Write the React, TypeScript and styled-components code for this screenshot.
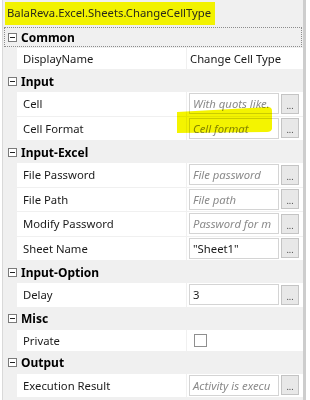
import styled, { createGlobalStyle } from "styled-components";

const GlobalStyle = createGlobalStyle`
  html, body {
    margin: 0;
    padding: 0;
    background: #ffffff;
  }
  body {
    font-family: "Noto Sans", "Open Sans", sans-serif;
    -webkit-font-smoothing: antialiased;
  }
`

const Panel = styled.div`
  position: relative;
  margin-left: 2px;
  width: 300px;
  height: 400px;
  background: #f0f0f0;
  border-left: 1px solid #d9d9d9;
  border-right: 3px solid #cdcdcd;
  overflow: hidden;
`
const TitleBar = styled.div`
  height: 26px;
  display: flex;
  align-items: center;
  padding-left: 2px;
`
const TitleMark = styled.span`
  background: #f2f200;
  height: 23px;
  line-height: 22px;
  padding: 0 4px 0 2px;
  font-size: 11.3px;
  color: #2a2a1a;
`
const GroupHeader = styled.div<{ $focused?: boolean }>`
  height: 22px;
  box-sizing: border-box;
  display: flex;
  align-items: center;
  gap: 4px;
  padding-left: 5px;
  font-size: 12px;
  font-weight: 700;
  color: #000;
  outline: ${p => (p.$focused ? "1px dotted #8c8c8c" : "none")};
  outline-offset: -2px;
`
const Toggle = styled.span`
  position: relative;
  width: 9px;
  height: 9px;
  box-sizing: border-box;
  border: 1px solid #7a7a7a;
  background: #fff;
  &::after {
    content: "";
    position: absolute;
    left: 1px;
    right: 1px;
    top: 3px;
    height: 1px;
    background: #222;
  }
`
const Row = styled.div<{ $tall?: boolean }>`
  display: grid;
  grid-template-columns: 170px 1fr;
  height: ${p => (p.$tall ? "24.5px" : "22px")};
  box-sizing: border-box;
  margin-left: 14px;
  background: #fff;
  border-bottom: 1px solid #f0f0f0;
  font-size: 11.3px;
  color: #1a1a1a;
`
const Label = styled.div`
  display: flex;
  align-items: center;
  padding-left: 6px;
  border-right: 1px solid #f0f0f0;
`
const Value = styled.div`
  display: flex;
  align-items: center;
  gap: 2px;
  padding-left: 2px;
`
const PlainValue = styled.span`
  padding-left: 1px;
`
const TextBox = styled.div<{ $hint?: boolean }>`
  width: 90px;
  height: 21px;
  box-sizing: border-box;
  border: 1px solid #d4d4d4;
  background: #fff;
  padding-left: 3px;
  line-height: 19px;
  white-space: nowrap;
  overflow: hidden;
  font-style: ${p => (p.$hint ? "italic" : "normal")};
  color: ${p => (p.$hint ? "#8a8a8a" : "#1a1a1a")};
`
const DotsButton = styled.div`
  width: 18px;
  height: 20px;
  box-sizing: border-box;
  border: 1px solid #c4c4c4;
  background: #e8e8e8;
  display: flex;
  align-items: flex-end;
  justify-content: center;
  font-size: 9px;
  line-height: 14px;
  color: #444;
`
const CheckBox = styled.span`
  width: 13px;
  height: 13px;
  box-sizing: border-box;
  margin-left: 5px;
  border: 1px solid #8f8f8f;
  background: #fff;
`
const Marker = styled.svg`
  position: absolute;
  left: 0;
  top: 0;
  mix-blend-mode: multiply;
  pointer-events: none;
`

type Prop =
  | { label: string; kind: "text"; value: string; hint?: boolean }
  | { label: string; kind: "plain"; value: string }
  | { label: string; kind: "check" };

const GROUPS: { name: string; props: Prop[] }[] = [
  { name: "Common", props: [{ label: "DisplayName", kind: "plain", value: "Change Cell Type" }] },
  {
    name: "Input",
    props: [
      { label: "Cell", kind: "text", value: "With quots like.", hint: true },
      { label: "Cell Format", kind: "text", value: "Cell format", hint: true },
    ],
  },
  {
    name: "Input-Excel",
    props: [
      { label: "File Password", kind: "text", value: "File password", hint: true },
      { label: "File Path", kind: "text", value: "File path", hint: true },
      { label: "Modify Password", kind: "text", value: "Password for m", hint: true },
      { label: "Sheet Name", kind: "text", value: "\"Sheet1\"" },
    ],
  },
  { name: "Input-Option", props: [{ label: "Delay", kind: "text", value: "3" }] },
  { name: "Misc", props: [{ label: "Private", kind: "check" }] },
  {
    name: "Output",
    props: [{ label: "Execution Result", kind: "text", value: "Activity is execu", hint: true }],
  },
];

const PropRow = ({ p }: { p: Prop }) => (
  <Row $tall={p.kind === "text"}>
    <Label>{p.label}</Label>
    <Value>
      {p.kind === "text" && (
        <>
          <TextBox $hint={p.hint}>{p.value}</TextBox>
          <DotsButton>...</DotsButton>
        </>
      )}
      {p.kind === "plain" && <PlainValue>{p.value}</PlainValue>}
      {p.kind === "check" && <CheckBox />}
    </Value>
  </Row>
);

export default function App() {
  return (
    <>
      <GlobalStyle />
      <Panel>
        <TitleBar>
          <TitleMark>BalaReva.Excel.Sheets.ChangeCellType</TitleMark>
        </TitleBar>
        {GROUPS.map((g, i) => (
          <div key={g.name}>
            <GroupHeader $focused={i === 0}>
              <Toggle />
              {g.name}
            </GroupHeader>
            {g.props.map(p => (
              <PropRow key={p.label} p={p} />
            ))}
          </div>
        ))}
        {/* highlighter stroke over Cell Format */}
        <Marker width="300" height="400" viewBox="0 0 300 400">
          <path d="M174 112 L265 107 Q269 107 269 111 L269 129 Q268 132 264 132 L174 133 Z" fill="#f4f400" />
        </Marker>
      </Panel>
    </>
  );
}
